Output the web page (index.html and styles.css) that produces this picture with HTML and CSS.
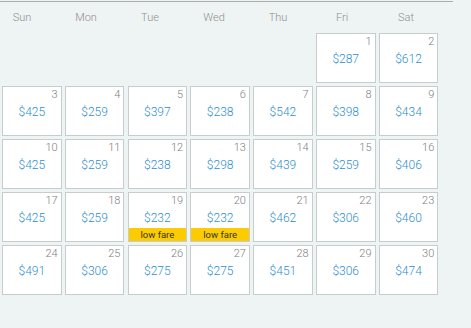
FILE: index.html
```html
<!DOCTYPE html>
<html>
<head>
<meta charset="utf-8">
<link rel="stylesheet" href="styles.css">
</head>
<body>
<div class="calendar">
  <div class="weekdays">
    <div class="wd">Sun</div><div class="wd">Mon</div><div class="wd">Tue</div><div class="wd">Wed</div><div class="wd">Thu</div><div class="wd">Fri</div><div class="wd">Sat</div>
  </div>
  <div class="grid">
    <div class="blank"></div><div class="blank"></div><div class="blank"></div><div class="blank"></div><div class="blank"></div>
    <div class="day"><span class="num">1</span><span class="price">$287</span></div>
    <div class="day"><span class="num">2</span><span class="price">$612</span></div>

    <div class="day"><span class="num">3</span><span class="price">$425</span></div>
    <div class="day"><span class="num">4</span><span class="price">$259</span></div>
    <div class="day"><span class="num">5</span><span class="price">$397</span></div>
    <div class="day"><span class="num">6</span><span class="price">$238</span></div>
    <div class="day"><span class="num">7</span><span class="price">$542</span></div>
    <div class="day"><span class="num">8</span><span class="price">$398</span></div>
    <div class="day"><span class="num">9</span><span class="price">$434</span></div>

    <div class="day"><span class="num">10</span><span class="price">$425</span></div>
    <div class="day"><span class="num">11</span><span class="price">$259</span></div>
    <div class="day"><span class="num">12</span><span class="price">$238</span></div>
    <div class="day"><span class="num">13</span><span class="price">$298</span></div>
    <div class="day"><span class="num">14</span><span class="price">$439</span></div>
    <div class="day"><span class="num">15</span><span class="price">$259</span></div>
    <div class="day"><span class="num">16</span><span class="price">$406</span></div>

    <div class="day"><span class="num">17</span><span class="price">$425</span></div>
    <div class="day"><span class="num">18</span><span class="price">$259</span></div>
    <div class="day"><span class="num">19</span><span class="price">$232</span><span class="low">low fare</span></div>
    <div class="day"><span class="num">20</span><span class="price">$232</span><span class="low">low fare</span></div>
    <div class="day"><span class="num">21</span><span class="price">$462</span></div>
    <div class="day"><span class="num">22</span><span class="price">$306</span></div>
    <div class="day"><span class="num">23</span><span class="price">$460</span></div>

    <div class="day"><span class="num">24</span><span class="price">$491</span></div>
    <div class="day"><span class="num">25</span><span class="price">$306</span></div>
    <div class="day"><span class="num">26</span><span class="price">$275</span></div>
    <div class="day"><span class="num">27</span><span class="price">$275</span></div>
    <div class="day"><span class="num">28</span><span class="price">$451</span></div>
    <div class="day"><span class="num">29</span><span class="price">$306</span></div>
    <div class="day"><span class="num">30</span><span class="price">$474</span></div>
  </div>
</div>
</body>
</html>
```

FILE: styles.css
```css
html, body {
  margin: 0;
  padding: 0;
  background: #eef3f3;
  font-family: Roboto, "Liberation Sans", sans-serif;
}
.calendar {
  width: 453px;
  margin-top: 1px;
  border-top: 1px solid #a9adad;
}
.weekdays {
  display: grid;
  grid-template-columns: repeat(7, 64px);
  height: 31px;
}
.wd {
  padding-right: 20px;
  text-align: center;
  font-size: 11px;
  font-weight: 300;
  color: #8f8f8f;
  padding-top: 9px;
}
.grid {
  display: grid;
  grid-template-columns: repeat(7, 59.6px);
  grid-auto-rows: 50px;
  column-gap: 3.2px;
  row-gap: 3px;
  padding-left: 2px;
}
.day {
  box-sizing: border-box;
  background: #fff;
  border: 1px solid #c7cccc;
  display: flex;
  flex-direction: column;
}
.num {
  text-align: right;
  font-size: 11px;
  font-weight: 300;
  color: #808080;
  padding: 2px 3px 0 0;
  line-height: 12px;
}
.price {
  text-align: center;
  font-size: 12px;
  font-weight: 300;
  color: #2f8fcf;
  line-height: 14px;
  margin-top: 4px;
}
.low {
  margin-top: auto;
  background: #fccc00;
  color: #333;
  font-size: 9.5px;
  text-align: center;
  line-height: 13px;
}
```
